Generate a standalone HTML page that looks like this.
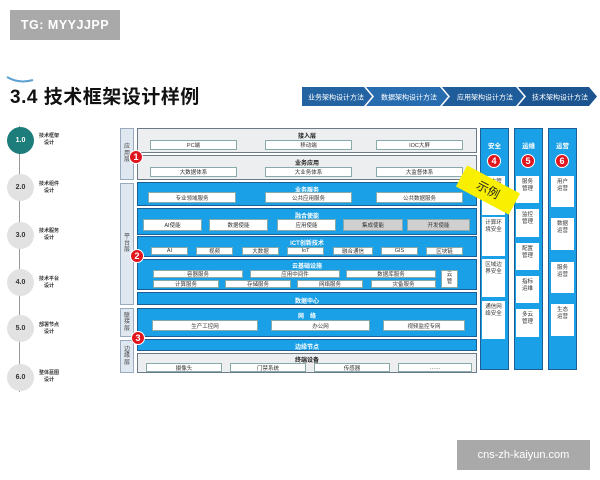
<!DOCTYPE html>
<html><head><meta charset="utf-8"><style>
*{margin:0;padding:0;box-sizing:border-box}
body{width:600px;height:480px;background:#fff;position:relative;overflow:hidden;font-family:"Liberation Sans","Noto Sans CJK SC",sans-serif}
.a{position:absolute}
.t{display:flex;align-items:center;justify-content:center;text-align:center;line-height:1}
.w{position:absolute;background:#fff;border:1px solid #8aa;font-size:5.5px;color:#333;display:flex;align-items:center;justify-content:center}
.g{background:#d0d0d0}
.blue{position:absolute;background:#19a0e6;border:1.5px solid #1d5f94}
.gray{position:absolute;background:#eceef0;border:1.5px solid #6c7a88}
.h{position:absolute;left:0;right:0;text-align:center;font-size:6px;font-weight:bold}
.blue .h{color:#fff}
.lay{position:absolute;left:120px;width:14px;background:#dfe7f0;border:1px solid #9aabbd;font-size:6px;color:#444;display:flex;align-items:center;justify-content:center;line-height:1.1;text-align:center}
.rb{position:absolute;width:14px;height:14px;border-radius:50%;background:#e0161e;border:1px solid #fff;color:#fff;font-size:9px;font-weight:bold;display:flex;align-items:center;justify-content:center}
.circ{position:absolute;left:7px;width:27px;height:27px;border-radius:50%;background:#e2e2e2;font-size:7px;font-weight:bold;color:#333;display:flex;align-items:center;justify-content:center}
.lbl{position:absolute;left:36px;width:26px;font-size:5px;font-weight:bold;color:#333;text-align:center;line-height:1.3}
.col{position:absolute;top:128px;width:29px;height:242px;background:#19a0e6;border:1.5px solid #1d5f94}
.col .ti{position:absolute;top:11px;left:0;right:0;text-align:center;color:#fff;font-size:6.5px;font-weight:bold}
.col .rb{left:6px;top:25px}
.cb{position:absolute;background:#fff;font-size:5.5px;color:#333;text-align:center;line-height:1.3;padding-top:3px}
</style></head><body>

<div class="a t" style="left:10px;top:10px;width:110px;height:30px;background:#a9a9a9;color:#fff;font-size:12.5px;font-weight:bold;letter-spacing:0.5px">TG: MYYJJPP</div>

<svg class="a" style="left:5px;top:75px" width="30" height="10"><path d="M2 2 Q14 9 28 5" stroke="#5aa0d0" stroke-width="2" fill="none"/></svg>
<div class="a" style="left:10px;top:82px;font-size:19px;font-weight:bold;color:#111;letter-spacing:0.5px">3.4 技术框架设计样例</div>

<svg class="a" style="left:302px;top:87px" width="298" height="20">
<polygon points="0,0 62,0 70,9.5 62,19 0,19" fill="#2363a2"/>
<polygon points="64,0 138,0 146,9.5 138,19 64,19 72,9.5" fill="#276cae"/>
<polygon points="140,0 214,0 222,9.5 214,19 140,19 148,9.5" fill="#1f5c9a"/>
<polygon points="216,0 287,0 295,9.5 287,19 216,19 224,9.5" fill="#1b548f"/>
<g fill="#fff" font-size="7" font-family="Liberation Sans,Noto Sans CJK SC,sans-serif" text-anchor="middle">
<text x="34" y="12.5">业务架构设计方法</text><text x="107" y="12.5">数据架构设计方法</text><text x="183" y="12.5">应用架构设计方法</text><text x="258" y="12.5">技术架构设计方法</text></g>
</svg>

<div class="a" style="left:19px;top:126px;width:1px;height:266px;background:#999"></div>
<div class="circ" style="top:127px;background:#1d7d7a;color:#fff">1.0</div>
<div class="lbl" style="top:133px">技术框架<br>设计</div>
<div class="circ" style="top:174px">2.0</div>
<div class="lbl" style="top:181px">技术组件<br>设计</div>
<div class="circ" style="top:222px">3.0</div>
<div class="lbl" style="top:228px">技术服务<br>设计</div>
<div class="circ" style="top:269px">4.0</div>
<div class="lbl" style="top:276px">技术平台<br>设计</div>
<div class="circ" style="top:315px">5.0</div>
<div class="lbl" style="top:322px">部署节点<br>设计</div>
<div class="circ" style="top:364px">6.0</div>
<div class="lbl" style="top:370px">整体蓝图<br>设计</div>

<div class="lay" style="top:128px;height:52px">应<br>用<br>层</div>
<div class="lay" style="top:183px;height:122px">平<br>台<br>层</div>
<div class="lay" style="top:308px;height:29px">联<br>接<br>层</div>
<div class="lay" style="top:340px;height:33px">边<br>缘<br>层</div>

<div class="gray" style="left:137px;top:128px;width:340px;height:25px"><div class="h" style="top:2px;color:#222">接入层</div></div>
<div class="w" style="left:150px;top:140px;width:87px;height:10px">PC端</div>
<div class="w" style="left:265px;top:140px;width:87px;height:10px">移动端</div>
<div class="w" style="left:376px;top:140px;width:87px;height:10px">IOC大屏</div>
<div class="gray" style="left:137px;top:155px;width:340px;height:25px"><div class="h" style="top:2px;color:#222">业务应用</div></div>
<div class="w" style="left:150px;top:167px;width:87px;height:10px">大数据体系</div>
<div class="w" style="left:265px;top:167px;width:87px;height:10px">大业务体系</div>
<div class="w" style="left:376px;top:167px;width:87px;height:10px">大监督体系</div>

<div class="blue" style="left:137px;top:182px;width:340px;height:24px"><div class="h" style="top:2px">业务服务</div></div>
<div class="w" style="left:148px;top:192px;width:88px;height:11px">专业领域服务</div>
<div class="w" style="left:265px;top:192px;width:87px;height:11px">公共应用服务</div>
<div class="w" style="left:376px;top:192px;width:87px;height:11px">公共数据服务</div>

<div class="blue" style="left:137px;top:208px;width:340px;height:27px"><div class="h" style="top:2px">融合使能</div></div>
<div class="w" style="left:143px;top:219px;width:59px;height:12px">AI使能</div>
<div class="w" style="left:209px;top:219px;width:59px;height:12px">数据使能</div>
<div class="w" style="left:277px;top:219px;width:59px;height:12px">应用使能</div>
<div class="w g" style="left:343px;top:219px;width:60px;height:12px">集成使能</div>
<div class="w g" style="left:407px;top:219px;width:63px;height:12px">开发使能</div>

<div class="blue" style="left:137px;top:236px;width:340px;height:21px"><div class="h" style="top:1px">ICT创新技术</div></div>
<div class="w" style="left:151px;top:247px;width:37px;height:8px">AI</div>
<div class="w" style="left:196px;top:247px;width:37px;height:8px">视频</div>
<div class="w" style="left:242px;top:247px;width:37px;height:8px">大数据</div>
<div class="w" style="left:287px;top:247px;width:37px;height:8px">IoT</div>
<div class="w" style="left:333px;top:247px;width:40px;height:8px">融合通信</div>
<div class="w" style="left:381px;top:247px;width:37px;height:8px">GIS</div>
<div class="w" style="left:426px;top:247px;width:37px;height:8px">区块链</div>

<div class="blue" style="left:137px;top:259px;width:340px;height:31px"><div class="h" style="top:1px">云基础设施</div></div>
<div class="w" style="left:153px;top:270px;width:90px;height:8px">容器服务</div>
<div class="w" style="left:250px;top:270px;width:90px;height:8px">应用中间件</div>
<div class="w" style="left:346px;top:270px;width:90px;height:8px">数据库服务</div>
<div class="w" style="left:153px;top:280px;width:66px;height:8px">计算服务</div>
<div class="w" style="left:225px;top:280px;width:66px;height:8px">存储服务</div>
<div class="w" style="left:297px;top:280px;width:66px;height:8px">网络服务</div>
<div class="w" style="left:371px;top:280px;width:65px;height:8px">灾备服务</div>
<div class="w" style="left:441px;top:270px;width:17px;height:18px;line-height:1.2;text-align:center">云<br>管</div>

<div class="blue" style="left:137px;top:292px;width:340px;height:13px"><div class="h" style="top:2.5px">数据中心</div></div>

<div class="blue" style="left:137px;top:308px;width:340px;height:29px"><div class="h" style="top:2px">网　络</div></div>
<div class="w" style="left:152px;top:320px;width:106px;height:11px">生产工控网</div>
<div class="w" style="left:271px;top:320px;width:99px;height:11px">办公网</div>
<div class="w" style="left:383px;top:320px;width:82px;height:11px">视频监控专网</div>

<div class="blue" style="left:137px;top:339px;width:340px;height:12px"><div class="h" style="top:2px">边缘节点</div></div>

<div class="gray" style="left:137px;top:353px;width:340px;height:20px"><div class="h" style="top:1px;color:#222">终端设备</div></div>
<div class="w" style="left:146px;top:363px;width:76px;height:9px">摄像头</div>
<div class="w" style="left:230px;top:363px;width:76px;height:9px">门禁系统</div>
<div class="w" style="left:314px;top:363px;width:76px;height:9px">传感器</div>
<div class="w" style="left:398px;top:363px;width:74px;height:9px">……</div>

<div class="rb" style="left:129px;top:150px">1</div>
<div class="rb" style="left:130px;top:249px">2</div>
<div class="rb" style="left:131px;top:331px">3</div>

<div class="col" style="left:480px"><div class="ti">安全</div><div class="rb">4</div></div>
<div class="cb" style="left:482px;top:176px;width:23px;height:39px">日志管<br>理</div>
<div class="cb" style="left:482px;top:217px;width:23px;height:39px">计算环<br>境安全</div>
<div class="cb" style="left:482px;top:259px;width:23px;height:38px">区域边<br>界安全</div>
<div class="cb" style="left:482px;top:301px;width:23px;height:38px">通信网<br>络安全</div>

<div class="col" style="left:514px"><div class="ti">运维</div><div class="rb">5</div></div>
<div class="cb" style="left:516px;top:176px;width:23px;height:27px">服务<br>管理</div>
<div class="cb" style="left:516px;top:209px;width:23px;height:28px">监控<br>管理</div>
<div class="cb" style="left:516px;top:243px;width:23px;height:27px">配置<br>管理</div>
<div class="cb" style="left:516px;top:276px;width:23px;height:27px">指标<br>运维</div>
<div class="cb" style="left:516px;top:309px;width:23px;height:28px">多云<br>管理</div>

<div class="col" style="left:548px"><div class="ti">运营</div><div class="rb">6</div></div>
<div class="cb" style="left:551px;top:176px;width:23px;height:31px">用户<br>运营</div>
<div class="cb" style="left:551px;top:218px;width:23px;height:32px">数据<br>运营</div>
<div class="cb" style="left:551px;top:262px;width:23px;height:31px">服务<br>运营</div>
<div class="cb" style="left:551px;top:304px;width:23px;height:32px">生态<br>运营</div>

<div class="a t" style="left:458px;top:178px;width:60px;height:24px;background:#f8f000;transform:rotate(28deg);font-size:12px;color:#222">示例</div>

<div class="a t" style="left:457px;top:440px;width:133px;height:30px;background:#a9a9a9;color:#fff;font-size:11px">cns-zh-kaiyun.com</div>
</body></html>
